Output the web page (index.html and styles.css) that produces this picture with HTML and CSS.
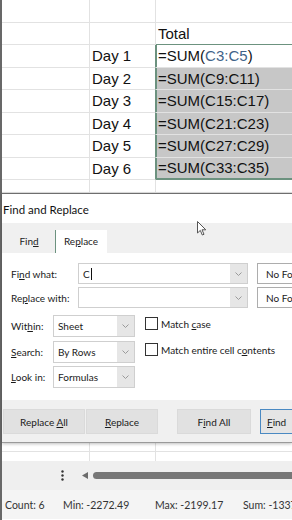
FILE: index.html
```html
<!DOCTYPE html>
<html>
<head>
    <title>Find and Replace</title>
    <link rel="stylesheet" href="styles.css">
</head>
<body>
<div class="screen">
    <div class="sheet">
        <div class="row"><div class="ca"></div><div class="cb"></div><div class="cc"></div></div>
        <div class="row"><div class="ca"></div><div class="cb"></div><div class="cc sel-top">Total</div></div>
        <div class="row"><div class="ca"></div><div class="cb sel-left">Day 1</div><div class="cc active">=SUM(<span class="ref">C3:C5</span>)</div></div>
        <div class="row"><div class="ca"></div><div class="cb sel-left">Day 2</div><div class="cc sel">=SUM(C9:C11)</div></div>
        <div class="row"><div class="ca"></div><div class="cb sel-left">Day 3</div><div class="cc sel">=SUM(C15:C17)</div></div>
        <div class="row"><div class="ca"></div><div class="cb sel-left">Day 4</div><div class="cc sel">=SUM(C21:C23)</div></div>
        <div class="row"><div class="ca"></div><div class="cb sel-left">Day 5</div><div class="cc sel">=SUM(C27:C29)</div></div>
        <div class="row"><div class="ca"></div><div class="cb sel-left">Day 6</div><div class="cc sel sel-bottom">=SUM(C33:C35)</div></div>
        <div class="row part"><div class="ca"></div><div class="cb"></div><div class="cc"></div></div>
    </div>

    <div class="dialog">
        <div class="title">Find and Replace</div>
        <div class="tabs">
            <div class="tab">Fin<u>d</u></div>
            <div class="tab active">Re<u>p</u>lace</div>
        </div>
        <div class="page">
            <div class="field">
                <label class="lbl-wide">Fi<u>n</u>d what:</label>
                <div class="combo wide"><span class="val">C<span class="caret"></span></span><span class="drop"><svg width="7" height="4" viewBox="0 0 7 4"><polyline points="0.5,0.5 3.5,3.5 6.5,0.5" fill="none" stroke="#9a9a9a" stroke-width="1"/></svg></span></div>
                <div class="fmt">No Fo</div>
            </div>
            <div class="field">
                <label class="lbl-wide">Re<u>p</u>lace with:</label>
                <div class="combo wide"><span class="val"></span><span class="drop"><svg width="7" height="4" viewBox="0 0 7 4"><polyline points="0.5,0.5 3.5,3.5 6.5,0.5" fill="none" stroke="#9a9a9a" stroke-width="1"/></svg></span></div>
                <div class="fmt">No Fo</div>
            </div>
            <div class="options">
                <div class="opt-left">
                    <div class="field small">
                        <label class="lbl">Wit<u>h</u>in:</label>
                        <div class="combo"><span class="val">Sheet</span><span class="drop"><svg width="7" height="4" viewBox="0 0 7 4"><polyline points="0.5,0.5 3.5,3.5 6.5,0.5" fill="none" stroke="#9a9a9a" stroke-width="1"/></svg></span></div>
                    </div>
                    <div class="field small">
                        <label class="lbl"><u>S</u>earch:</label>
                        <div class="combo"><span class="val">By Rows</span><span class="drop"><svg width="7" height="4" viewBox="0 0 7 4"><polyline points="0.5,0.5 3.5,3.5 6.5,0.5" fill="none" stroke="#9a9a9a" stroke-width="1"/></svg></span></div>
                    </div>
                    <div class="field small">
                        <label class="lbl"><u>L</u>ook in:</label>
                        <div class="combo"><span class="val">Formulas</span><span class="drop"><svg width="7" height="4" viewBox="0 0 7 4"><polyline points="0.5,0.5 3.5,3.5 6.5,0.5" fill="none" stroke="#9a9a9a" stroke-width="1"/></svg></span></div>
                    </div>
                </div>
                <div class="opt-right">
                    <div class="check"><span class="box"></span><span>Match <u>c</u>ase</span></div>
                    <div class="check"><span class="box"></span><span>Match entire cell c<u>o</u>ntents</span></div>
                </div>
            </div>
        </div>
        <div class="footer">
            <button class="btn wide">Replace <u>A</u>ll</button>
            <button class="btn"><u>R</u>eplace</button>
            <button class="btn gap">F<u>i</u>nd All</button>
            <button class="btn default"><u>F</u>ind</button>
        </div>
        <svg class="cursor" width="10" height="15" viewBox="0 0 10 15">
            <path d="M0.5,0.5 L0.5,12 L3.3,9.4 L5.3,14 L7,13.3 L5,8.8 L8.8,8.8 Z" fill="#fff" stroke="#555" stroke-width="1" stroke-linejoin="round"/>
        </svg>
    </div>

    <div class="sheet lower">
        <div class="row low1"><div class="ca"></div><div class="cb"></div><div class="cc"></div></div>
        <div class="row low2"><div class="ca"></div><div class="cb"></div><div class="cc"></div></div>
    </div>

    <div class="scrollbar">
        <svg class="dots" width="3" height="11" viewBox="0 0 3 11"><circle cx="1.5" cy="1.5" r="1.2" fill="#333"/><circle cx="1.5" cy="5.5" r="1.2" fill="#333"/><circle cx="1.5" cy="9.5" r="1.2" fill="#333"/></svg>
        <svg class="arrow" width="6" height="7" viewBox="0 0 6 7"><polygon points="6,0 6,7 0,3.5" fill="#6b6b6b"/></svg>
        <div class="thumb"></div>
    </div>

    <div class="status">
        <span>Count: 6</span>
        <span>Min: -2272.49</span>
        <span>Max: -2199.17</span>
        <span>Sum: -1337</span>
    </div>
</div>
</body>
</html>
```

FILE: styles.css
```css
* { box-sizing: border-box; }
body { margin: 0; width: 292px; height: 520px; overflow: hidden; background: #fff; }
.screen { height: 520px; border-left: 2px solid #686868; font-family: "Lato", "Noto Sans", sans-serif; color: #1a1a1a; }

/* worksheet */
.sheet { font-family: "Liberation Sans", Arial, sans-serif; font-size: 15px; color: #111; }
.row { display: flex; height: 22.5px; }
.row.part { height: 13px; }
.ca, .cb, .cc { border-bottom: 1px solid #e2e2e2; white-space: nowrap; display: flex; align-items: center; flex-shrink: 0; }
.ca { width: 88px; border-right: 1px solid #e2e2e2; }
.cb { width: 66px; border-right: 1px solid #e2e2e2; padding-left: 2px; }
.cc { flex: 1; padding-left: 2px; overflow: hidden; }
.sel-top { border-bottom: 1px solid #6c927f; }
.sel-left { border-right: 1px solid #6c927f; }
.active { box-shadow: inset 1px 0 0 #6c927f; }
.sel { background: #c7c7c7; box-shadow: inset 1px 0 0 #6c927f; }
.sel-bottom { border-bottom: 2px solid #6c927f; }
.ref { color: #3f6389; }
.lower .row.low1 { height: 9px; }
.lower .row.low2 { height: 9px; }
.lower .row.low2 .ca, .lower .row.low2 .cb, .lower .row.low2 .cc { border-bottom: none; }

/* dialog */
.dialog { position: relative; border-top: 1px solid #6e6e6e; border-bottom: 1px solid #9a9a9a; background: #f0f0f0; box-shadow: 0 1px 3px rgba(0,0,0,0.25); font-size: 10px; }
.title { height: 29px; line-height: 31px; background: #fff; padding-left: 1px; font-size: 11.5px; color: #111; }
.tabs { display: flex; height: 30px; padding: 7px 0 0 1px; }
.tab { width: 52px; height: 23px; line-height: 23px; text-align: center; color: #222; flex-shrink: 0; }
.tab.active { background: #fff; }
.page { background: #fff; height: 147px; padding: 10px 0 0 9px; }
.field { display: flex; align-items: center; height: 21px; margin-bottom: 3px; white-space: nowrap; }
.field > * { flex-shrink: 0; }
.lbl-wide { width: 67px; }
.lbl { width: 42px; }
.combo { display: flex; height: 100%; border: 1px solid #cfcfcf; background: #fff; }
.combo.wide { width: 170px; }
.combo .val { flex: 1; padding-left: 4px; display: flex; align-items: center; }
.combo .drop { width: 17px; background: #e6e6e6; display: flex; align-items: center; justify-content: center; }
.caret { display: inline-block; width: 1px; height: 12px; background: #111; margin-left: 1px; }
.fmt { margin-left: 9px; height: 100%; flex: 1; border: 1px solid #adadad; border-right: none; padding-left: 8px; display: flex; align-items: center; }
.options { display: flex; margin-top: 7px; }
.opt-left { width: 134px; flex-shrink: 0; }
.field.small { height: 22px; margin-bottom: 3.5px; }
.field.small .combo { width: 82px; }
.opt-right { padding-top: 2px; }
.check { display: flex; align-items: center; height: 13px; margin-bottom: 13px; white-space: nowrap; }
.box { width: 13px; height: 13px; border: 1px solid #333; background: #fff; margin-right: 3px; flex-shrink: 0; }
.footer { height: 42px; display: flex; padding: 9px 0 0 1px; }
.btn { height: 25px; width: 72px; margin-right: 1px; border: 1px solid #dadada; background: #e1e1e1; font-family: inherit; font-size: 10px; color: #1a1a1a; padding: 0; flex-shrink: 0; }
.btn.wide { width: 82px; }
.btn.gap { margin-left: 18px; margin-right: 9px; width: 74px; }
.btn.default { flex: 1; border: 1px solid #4a89c2; border-right: none; background: #e5e5e5; text-align: left; padding-left: 6px; margin-right: 0; }
.cursor { position: absolute; left: 195px; top: 27px; }

/* bottom bars */
.scrollbar { height: 29px; background: #efefef; display: flex; align-items: center; padding-left: 59px; }
.dots { margin-right: 18px; flex-shrink: 0; }
.arrow { margin-right: 5px; flex-shrink: 0; }
.thumb { flex: 1; height: 7px; border-radius: 4px 0 0 4px; background: #777; }
.status { height: 29px; background: #f4f4f4; display: flex; align-items: center; padding-left: 3px; font-size: 10.5px; color: #333; white-space: nowrap; }
.status span { flex-shrink: 0; }
.status span:nth-child(1) { width: 58px; }
.status span:nth-child(2) { width: 92px; }
.status span:nth-child(3) { width: 88px; }
```
